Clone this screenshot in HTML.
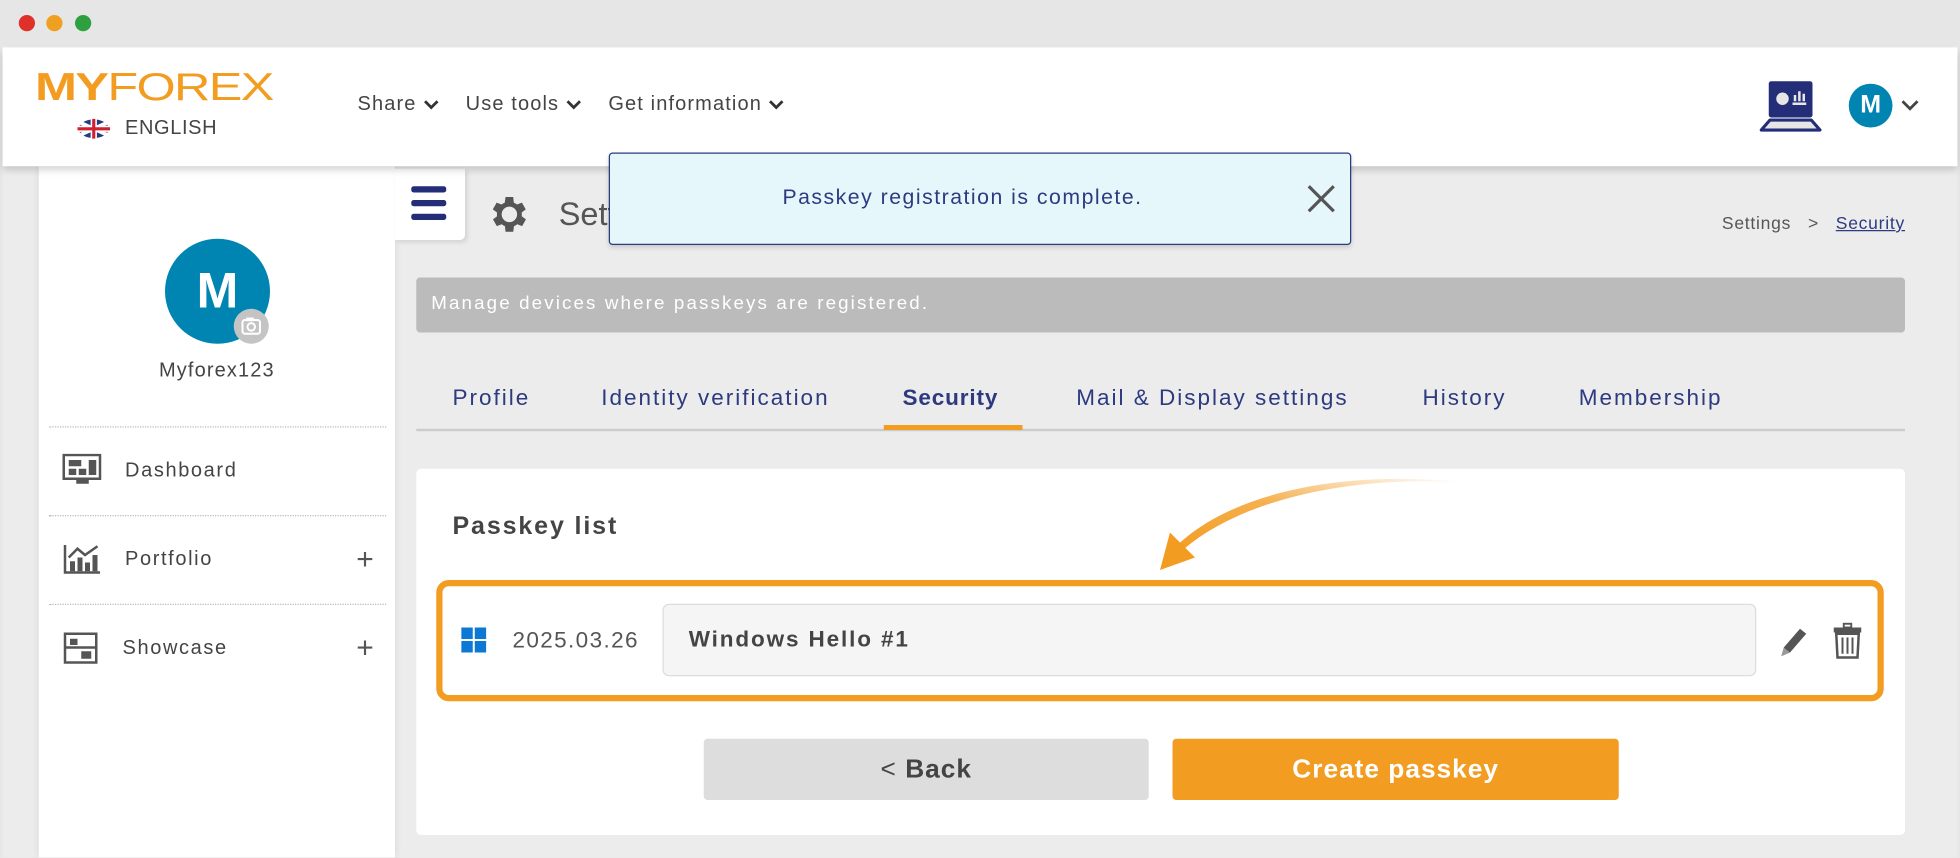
<!DOCTYPE html>
<html><head><meta charset="utf-8"><style>
html,body{margin:0;padding:0;width:1960px;height:858px;overflow:hidden;background:#e6e6e6}
#w{position:absolute;left:0;top:0;width:1568px;height:686px;transform:scale(1.25);transform-origin:0 0;font-family:"Liberation Sans",sans-serif;background:#e6e6e6}
.a{position:absolute}
.dot{position:absolute;top:12px;width:13px;height:13px;border-radius:50%}
.nav{color:#444;font-size:16px;letter-spacing:.9px}
.tab{position:absolute;top:308px;font-size:18px;color:#2d3a80;letter-spacing:1.6px}
.mi{position:absolute;left:100px;font-size:16px;color:#444;letter-spacing:1.3px}
.dv{position:absolute;left:39px;width:270px;border-top:1px dotted #bbb}
</style></head><body><div id="w">
<div class="dot" style="left:15px;background:#e0302a"></div>
<div class="dot" style="left:37px;background:#f0a020"></div>
<div class="dot" style="left:60px;background:#2fa040"></div>
<div class="a" style="left:2px;top:37px;width:1564px;height:649px;background:#ececec"></div>
<!-- sidebar -->
<div class="a" style="left:31px;top:133px;width:285px;height:553px;background:#fff;box-shadow:0 0 6px rgba(0,0,0,.1)"></div>
<div class="a" style="left:316px;top:135px;width:56px;height:57px;background:#fff;box-shadow:2px 2px 4px rgba(0,0,0,.1);border-radius:0 0 4px 0"></div>
<div class="a" style="left:329px;top:149px;width:28px;height:5px;background:#232d78;border-radius:2px;box-shadow:0 11px 0 #232d78,0 22px 0 #232d78"></div>
<div class="a" style="left:132px;top:191px;width:84px;height:84px;border-radius:50%;background:#0085b2;color:#fff;font-weight:bold;font-size:40px;text-align:center;line-height:84px">M</div>
<div class="a" style="left:187px;top:247px;width:28px;height:28px;border-radius:50%;background:#c4c4c4;border:0"><svg width="28" height="28"><rect x="7" y="9" width="14" height="11" rx="2" fill="none" stroke="#fff" stroke-width="1.6"/><circle cx="14" cy="14.5" r="3" fill="none" stroke="#fff" stroke-width="1.6"/><rect x="10" y="7" width="6" height="3" fill="#fff"/></svg></div>
<div class="a" style="left:31px;width:285px;top:288px;text-align:center;font-size:16px;color:#444;letter-spacing:.9px">Myforex123</div>
<div class="dv" style="top:341px"></div><div class="dv" style="top:412px"></div><div class="dv" style="top:483px"></div>
<svg class="a" style="left:50px;top:363px" width="32" height="26"><rect x="1" y="1" width="29" height="19" fill="none" stroke="#555" stroke-width="2"/><rect x="5" y="5" width="10" height="5" fill="#555"/><rect x="5" y="12" width="6" height="5" fill="#555"/><rect x="13" y="12" width="6" height="5" fill="#555"/><rect x="21" y="5" width="6" height="12" fill="#555"/><rect x="11" y="21" width="10" height="3" fill="#555"/></svg>
<div class="mi" style="top:368px">Dashboard</div>
<svg class="a" style="left:50px;top:434px" width="32" height="26"><path d="M2 2V24H30" fill="none" stroke="#555" stroke-width="2"/><rect x="6" y="15" width="4" height="8" fill="#555"/><rect x="12" y="12" width="4" height="11" fill="#555"/><rect x="18" y="16" width="4" height="7" fill="#555"/><rect x="24" y="10" width="4" height="13" fill="#555"/><path d="M5 12L12 5L18 10L28 3" fill="none" stroke="#555" stroke-width="2"/></svg>
<div class="mi" style="top:439px">Portfolio</div>
<div class="a" style="left:285px;top:434px;font-size:24px;color:#555">+</div>
<svg class="a" style="left:50px;top:505px" width="30" height="27"><rect x="2" y="2" width="25" height="23" fill="none" stroke="#555" stroke-width="2"/><path d="M2 13H27" stroke="#555" stroke-width="2"/><rect x="6" y="6" width="6" height="5" fill="#555"/><rect x="15" y="16" width="8" height="6" fill="#555"/></svg>
<div class="mi" style="left:98px;top:510px">Showcase</div>
<div class="a" style="left:285px;top:505px;font-size:24px;color:#555">+</div>
<!-- header -->
<div class="a" style="left:2px;top:38px;width:1564px;height:95px;background:#fff;box-shadow:0 3px 6px rgba(0,0,0,.18)"></div>
<div class="a" style="left:28px;top:53px;font-size:31px;color:#f39c22;letter-spacing:-1px;line-height:34px;transform:scaleX(1.3);transform-origin:0 0"><b>MY</b>FOREX</div>
<svg class="a" style="left:62px;top:95px" width="26" height="16"><ellipse cx="13" cy="8" rx="12" ry="7.5" fill="#263b80"/><path d="M2 3L24 13M2 13L24 3" stroke="#fff" stroke-width="3"/><path d="M13 0V16M0 8H26" stroke="#fff" stroke-width="5"/><path d="M13 0V16M0 8H26" stroke="#d02030" stroke-width="2.5"/></svg>
<div class="a" style="left:100px;top:94px;font-size:16px;color:#444;letter-spacing:.5px">ENGLISH</div>
<div class="a nav" style="left:286px;top:75px;display:flex;gap:22px">
<span>Share <svg width="12" height="8"><path d="M1 1L6 6L11 1" fill="none" stroke="#333" stroke-width="2.2"/></svg></span>
<span>Use tools <svg width="12" height="8"><path d="M1 1L6 6L11 1" fill="none" stroke="#333" stroke-width="2.2"/></svg></span>
<span>Get information <svg width="12" height="8"><path d="M1 1L6 6L11 1" fill="none" stroke="#333" stroke-width="2.2"/></svg></span></div>
<svg class="a" style="left:1406px;top:63px" width="52" height="44"><rect x="9" y="2" width="35" height="29" rx="2" fill="#232d78"/><circle cx="20" cy="16" r="5" fill="#e6e6e6"/><path d="M28 20H39M30 18V13M33.5 18V10M37 18V12" stroke="#e6e6e6" stroke-width="2"/><path d="M10 33H43L50 41H3Z" fill="#e6e6e6" stroke="#232d78" stroke-width="2.5" stroke-linejoin="round"/></svg>
<div class="a" style="left:1479px;top:67px;width:35px;height:35px;border-radius:50%;background:#0085b2;color:#fff;font-weight:bold;font-size:20px;text-align:center;line-height:35px">M</div>
<svg class="a" style="left:1521px;top:80px" width="14" height="9"><path d="M1 1L7 7L13 1" fill="none" stroke="#444" stroke-width="2.2"/></svg>
<!-- content -->
<svg class="a" style="left:389px;top:153px" width="37" height="37" viewBox="0 0 24 24"><path fill="#555" d="M19.4 13a7.5 7.5 0 0 0 0-2l2.1-1.6-2-3.5-2.5 1a7 7 0 0 0-1.7-1L15 3h-4l-.4 2.9a7 7 0 0 0-1.7 1l-2.5-1-2 3.5L6.6 11a7.5 7.5 0 0 0 0 2l-2.1 1.6 2 3.5 2.5-1a7 7 0 0 0 1.7 1L11 21h4l.4-2.9a7 7 0 0 0 1.7-1l2.5 1 2-3.5zM13 16a4 4 0 1 1 0-8 4 4 0 0 1 0 8z" transform="translate(-1 0)"/></svg>
<div class="a" style="left:447px;top:156px;font-size:26px;color:#555">Settings</div>
<div class="a" style="left:487px;top:122px;width:592px;height:72px;background:#e6f7fc;border:1px solid #2d3a80;border-radius:3px;box-shadow:0 2px 4px rgba(0,0,0,.15)"></div>
<div class="a" style="left:487px;top:148px;width:566px;text-align:center;font-size:17px;color:#2d3a80;letter-spacing:1.2px">Passkey registration is complete.</div>
<svg class="a" style="left:1045px;top:147px" width="24" height="24"><path d="M2 2L22 22M22 2L2 22" stroke="#555" stroke-width="2.6"/></svg>
<div class="a" style="right:44px;top:170px;font-size:14px;color:#555;letter-spacing:.6px">Settings &nbsp;&nbsp;&gt;&nbsp;&nbsp; <span style="color:#2d3a80;text-decoration:underline">Security</span></div>
<div class="a" style="left:333px;top:222px;width:1191px;height:44px;background:#bbb;border-radius:3px"></div>
<div class="a" style="left:345px;top:234px;font-size:15px;color:#fff;letter-spacing:1.7px">Manage devices where passkeys are registered.</div>
<div class="a" style="left:333px;top:343px;width:1191px;height:2px;background:#ccc"></div>
<div class="a" style="left:707px;top:340px;width:111px;height:4px;background:#f39c22"></div>
<div class="tab" style="left:362px">Profile</div>
<div class="tab" style="left:481px">Identity verification</div>
<div class="tab" style="left:722px;font-weight:bold;letter-spacing:.7px">Security</div>
<div class="tab" style="left:861px">Mail &amp; Display settings</div>
<div class="tab" style="left:1138px">History</div>
<div class="tab" style="left:1263px">Membership</div>
<div class="a" style="left:333px;top:375px;width:1191px;height:293px;background:#fff;border-radius:4px"></div>
<div class="a" style="left:362px;top:410px;font-size:20px;font-weight:bold;color:#444;letter-spacing:1.5px">Passkey list</div>
<svg class="a" style="left:920px;top:380px" width="260" height="85"><defs><linearGradient id="g" x1="1" y1="0" x2="0" y2="1"><stop offset="0" stop-color="#f39c22" stop-opacity="0"/><stop offset=".5" stop-color="#f39c22" stop-opacity=".8"/><stop offset="1" stop-color="#f39c22"/></linearGradient></defs><path d="M250 6C160 0 70 20 24 62L20 58C66 12 160 -4 250 6Z" fill="url(#g)"/><path d="M8 76L16 46L36 66Z" fill="#f39c22"/></svg>
<div class="a" style="left:349px;top:464px;width:1148px;height:87px;border:5px solid #f39c22;border-radius:10px"></div>
<svg class="a" style="left:369px;top:502px" width="20" height="20"><rect x="0" y="0" width="9.2" height="9.2" fill="#0a78d4"/><rect x="10.8" y="0" width="9.2" height="9.2" fill="#0a78d4"/><rect x="0" y="10.8" width="9.2" height="9.2" fill="#0a78d4"/><rect x="10.8" y="10.8" width="9.2" height="9.2" fill="#0a78d4"/></svg>
<div class="a" style="left:410px;top:502px;font-size:18px;color:#555;letter-spacing:1.1px">2025.03.26</div>
<div class="a" style="left:530px;top:483px;width:873px;height:56px;background:#f5f5f5;border:1px solid #ddd;border-radius:5px"></div>
<div class="a" style="left:551px;top:501px;font-size:18px;font-weight:bold;color:#444;letter-spacing:1.5px">Windows Hello #1</div>
<svg class="a" style="left:1422px;top:500px" width="26" height="28"><path d="M3 25L5 18L18 3L23 7L10 22Z" fill="#555"/><path d="M3 25L5 18L10 22Z" fill="#fff" opacity=".4"/></svg>
<svg class="a" style="left:1466px;top:498px" width="24" height="30"><rect x="9" y="1" width="6" height="3" fill="none" stroke="#555" stroke-width="1.5"/><rect x="1" y="4" width="22" height="4" fill="#555"/><path d="M3 9H21L20 28H4Z" fill="none" stroke="#555" stroke-width="2"/><path d="M8 12V25M12 12V25M16 12V25" stroke="#555" stroke-width="1.6"/></svg>
<div class="a" style="left:563px;top:591px;width:356px;height:49px;background:#ddd;border-radius:3px;text-align:center;line-height:49px;font-size:21px;color:#444;font-weight:bold;letter-spacing:.8px"><span style="font-weight:normal">&lt;</span> Back</div>
<div class="a" style="left:938px;top:591px;width:357px;height:49px;background:#f39c22;border-radius:3px;text-align:center;line-height:49px;font-size:21px;color:#fff;font-weight:bold;letter-spacing:.8px">Create passkey</div>
</div></body></html>
